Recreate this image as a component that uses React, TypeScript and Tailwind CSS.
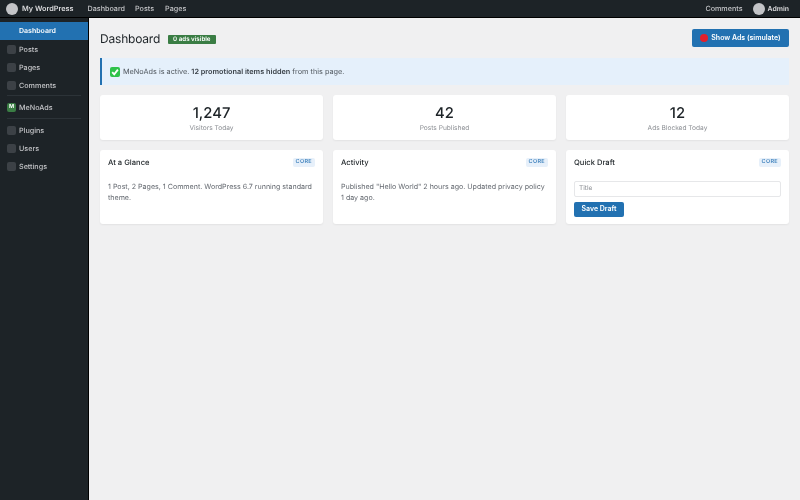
const font = { fontFamily: 'Inter, "Liberation Sans", sans-serif' }

const stats = [
  { value: '1,247', label: 'Visitors Today' },
  { value: '42', label: 'Posts Published' },
  { value: '12', label: 'Ads Blocked Today' },
]

function MenuItem({ label }: { label: string }) {
  return (
    <div className="flex h-[18px] items-center gap-[3px] pl-[7px] text-[7.2px] font-medium text-[#c3c4c7]">
      <span className="h-[9px] w-[9px] rounded-[2px] bg-[#3c4146]" />
      <span className="pt-[2px]">{label}</span>
    </div>
  )
}

function Widget({ title, children }: { title: string; children: React.ReactNode }) {
  return (
    <div className="h-[74px] rounded-[3px] bg-white px-[8px] pt-[7px] shadow-[0_1px_2px_rgba(0,0,0,0.06)]">
      <div className="flex h-[11px] items-center justify-between">
        <span className="text-[7.6px] font-medium text-[#1d2327]">{title}</span>
        <span className="rounded-[2px] bg-[#e7f0fa] px-[3px] py-[1px] text-[5.5px] leading-[7px] font-semibold tracking-[0.3px] text-[#3f82bd]">
          CORE
        </span>
      </div>
      {children}
    </div>
  )
}

export default function App() {
  return (
    <div
      style={font}
      className="flex h-[500px] w-[800px] flex-col overflow-hidden bg-[#f0f0f1] blur-[0.3px] [text-rendering:geometricPrecision]"
    >
      <header className="flex h-[18px] shrink-0 items-center justify-between border-b border-black bg-[#1d2327] pt-[1px] pr-[11px] pl-[6px] text-[7.2px] font-medium text-[#c3c4c7]">
        <div className="flex items-center">
          <span className="h-[12px] w-[12px] rounded-full bg-[#c3c4c7]" />
          <span className="ml-[4px] text-[7.3px] font-semibold text-[#dcdcde]">My WordPress</span>
          <span className="ml-[14px]">Dashboard</span>
          <span className="ml-[10px]">Posts</span>
          <span className="ml-[11px]">Pages</span>
        </div>
        <div className="flex items-center">
          <span>Comments</span>
          <span className="ml-[10px] h-[12px] w-[12px] rounded-full bg-[#c3c4c7]" />
          <span className="ml-[3px] text-[6.9px] font-semibold text-[#dcdcde]">Admin</span>
        </div>
      </header>
      <div className="flex flex-1">
        <aside className="w-[89px] shrink-0 border-r border-black bg-[#1d2327] pt-[4px]">
          <div className="flex h-[18px] items-center bg-[#2271b1] pt-[1px] pl-[19px] text-[7px] font-semibold text-white">
            Dashboard
          </div>
          <MenuItem label="Posts" />
          <MenuItem label="Pages" />
          <MenuItem label="Comments" />
          <div className="mt-[1px] mr-[7px] mb-[2px] ml-[7px] h-px bg-[#2c3338]" />
          <div className="flex h-[18px] items-center gap-[3px] pl-[7px] text-[7.2px] font-medium text-[#c3c4c7]">
            <span className="flex h-[9px] w-[9px] items-center justify-center rounded-[2px] bg-[#3a7d44] text-[5.5px] font-bold text-white">
              M
            </span>
            <span className="pt-[2px]">MeNoAds</span>
          </div>
          <div className="mx-[7px] my-[2px] h-px bg-[#2c3338]" />
          <MenuItem label="Plugins" />
          <MenuItem label="Users" />
          <MenuItem label="Settings" />
        </aside>
        <main className="flex-1 px-[11px] pt-[11px]">
          <div className="flex h-[18px] items-center justify-between">
            <div className="flex items-center gap-[8px] pt-[2px]">
              <h1 className="text-[12px] leading-[18px] font-normal tracking-[-0.2px] text-[#1d2327]">Dashboard</h1>
              <span className="mt-[1px] rounded-[1px] bg-[#3a7d44] px-[5px] py-[1px] text-[6.2px] leading-[7px] font-semibold text-white">
                0 ads visible
              </span>
            </div>
            <button className="flex h-[18px] w-[97px] items-center justify-center gap-[3px] rounded-[2px] bg-[#2271b1] text-[7px] font-semibold text-white">
              <span className="h-[8px] w-[8px] shrink-0 rounded-full bg-[#e3202c]" />
              Show Ads (simulate)
            </button>
          </div>
          <div className="mt-[11px] flex h-[27px] items-center gap-[3px] border-l-[2px] border-[#2271b1] bg-[#e5f0fb] pl-[8px] text-[7.3px] text-[#50575e]">
            <span className="flex h-[10px] w-[10px] items-center justify-center rounded-[2px] bg-[#2fc24a]">
              <svg viewBox="0 0 10 10" className="h-[10px] w-[10px]">
                <path d="M2.2 5.2 4.2 7.4 7.9 2.6" fill="none" stroke="white" strokeWidth="1.8" />
              </svg>
            </span>
            <span className="pt-[2px]">
              MeNoAds is active. <b className="font-semibold text-[#3c434a]">12 promotional items hidden</b> from this
              page.
            </span>
          </div>
          <div className="mt-[10px] grid grid-cols-3 gap-[10px]">
            {stats.map((s) => (
              <div
                key={s.label}
                className="flex h-[45px] flex-col items-center rounded-[3px] bg-white pt-[9px] shadow-[0_1px_2px_rgba(0,0,0,0.06)]"
              >
                <div className="text-[14.8px] leading-[18px] font-medium text-[#1d2327]">{s.value}</div>
                <div className="mt-[1px] text-[6.6px] leading-[10px] text-[#8c8f94]">{s.label}</div>
              </div>
            ))}
          </div>
          <div className="mt-[10px] grid grid-cols-3 gap-[10px]">
            <Widget title="At a Glance">
              <p className="mt-[13px] text-[7.1px] leading-[11px] text-[#646970]">
                1 Post, 2 Pages, 1 Comment. WordPress 6.7 running standard theme.
              </p>
            </Widget>
            <Widget title="Activity">
              <p className="mt-[13px] text-[7.1px] leading-[11px] text-[#646970]">
                Published "Hello World" 2 hours ago. Updated privacy policy 1 day ago.
              </p>
            </Widget>
            <Widget title="Quick Draft">
              <div className="mt-[13px] flex h-[16px] items-center rounded-[2px] border border-[#e6e7e9] px-[4px] text-[6.5px] text-[#8c8f94]">
                Title
              </div>
              <button className="mt-[5px] flex h-[15px] w-[50px] items-center justify-center rounded-[2px] bg-[#2271b1] text-[7px] font-semibold text-white">
                Save Draft
              </button>
            </Widget>
          </div>
        </main>
      </div>
    </div>
  )
}
